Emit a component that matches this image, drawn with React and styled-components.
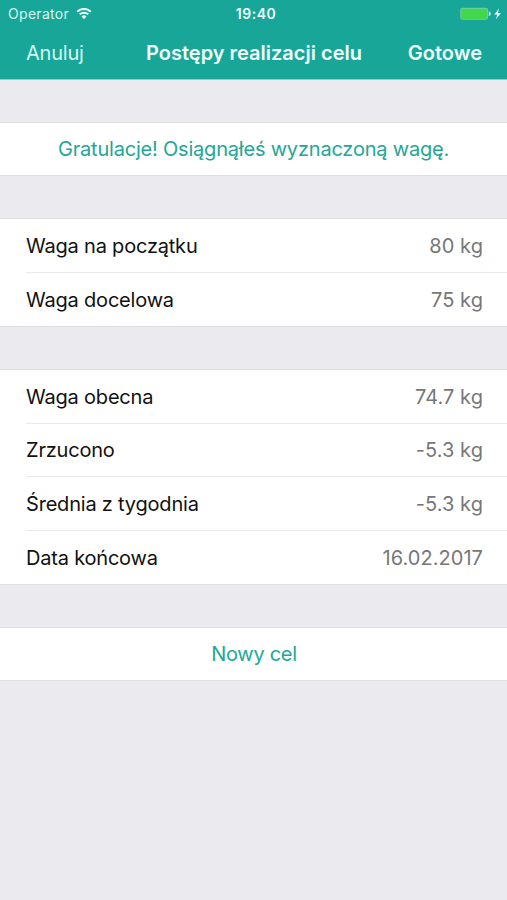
import styled, { createGlobalStyle } from "styled-components";

const startRows = [
  { label: "Waga na początku", value: "80 kg" },
  { label: "Waga docelowa", value: "75 kg" },
];

const progressRows = [
  { label: "Waga obecna", value: "74.7 kg" },
  { label: "Zrzucono", value: "-5.3 kg" },
  { label: "Średnia z tygodnia", value: "-5.3 kg" },
  { label: "Data końcowa", value: "16.02.2017" },
];

const WifiIcon = () => (
  <svg width="16" height="12" viewBox="0 0 16 12" fill="none">
    <path d="M1.2 3.700a9.700 9.700 0 0 1 13.600 0" stroke="#effffb" strokeWidth="2" />
    <path d="M3.700 6.400a6.100 6.100 0 0 1 8.600 0" stroke="#effffb" strokeWidth="2" />
    <path d="M8 11.200 5.500 8.600a3.500 3.500 0 0 1 5 0z" fill="#effffb" />
  </svg>
);

const BatteryIcon = () => (
  <svg width="42" height="14" viewBox="0 0 42 14">
    <rect x="0.3" y="0.8" width="27.8" height="12" rx="2.4" fill="#74cda8" />
    <rect x="1.3" y="1.7" width="25.8" height="10.2" rx="1.4" fill="#43d74e" />
    <path d="M28.8 4.6c1.3.2 2 1.1 2 2.2s-.7 2-2 2.2z" fill="#bdf0e2" />
    <path d="M39 1.6 34.300 7.500h2.900L36 12.200l4.900-6.100h-3z" fill="#effffb" />
  </svg>
);

const Table = ({ rows }) => (
  <Section>
    {rows.map(({ label, value }) => (
      <Row key={label}>
        <span>{label}</span>
        <Value>{value}</Value>
      </Row>
    ))}
  </Section>
);

const App = () => {
  return (
    <>
      <GlobalStyle />
      <Screen>
        <Header>
          <StatusBar>
            <Carrier>
              Operator
              <WifiIcon />
            </Carrier>
            <Time>19:40</Time>
            <Battery>
              <BatteryIcon />
            </Battery>
          </StatusBar>
          <NavBar>
            <NavButton>Anuluj</NavButton>
            <Title>Postępy realizacji celu</Title>
            <NavButton $strong>Gotowe</NavButton>
          </NavBar>
        </Header>
        <Main>
          <Section>
            <Message>Gratulacje! Osiągnąłeś wyznaczoną wagę.</Message>
          </Section>
          <Table rows={startRows} />
          <Table rows={progressRows} />
          <Section>
            <Action>Nowy cel</Action>
          </Section>
        </Main>
      </Screen>
    </>
  );
};
export default App;

const GlobalStyle = createGlobalStyle`
  * {
    box-sizing: border-box;
  }
  body {
    margin: 0;
    font-family: Inter, "Liberation Sans", sans-serif;
    background: #eaeaef;
  }
  button {
    padding: 0;
    border: 0;
    background: none;
    font: inherit;
    color: inherit;
    letter-spacing: inherit;
  }
`;

const Screen = styled.div`
  min-height: 100vh;
  background: #eaeaef;
`;

const Header = styled.header`
  height: 80px;
  border-bottom: 1px solid #8fd0cb;
  background: #18a699;
  color: #effffb;
`;

const StatusBar = styled.div`
  display: grid;
  grid-template-columns: 1fr auto 1fr;
  align-items: center;
  height: 27px;
  padding: 0 5px 0 8px;
  font-size: 14px;
`;

const Carrier = styled.div`
  display: flex;
  align-items: center;
  gap: 7px;
  letter-spacing: 0.3px;
  color: #d5f7ef;
`;

const Time = styled.div`
  padding-left: 2px;
  font-weight: 600;
  letter-spacing: 0.5px;
`;

const Battery = styled.div`
  display: flex;
  justify-content: flex-end;
`;

const NavBar = styled.nav`
  display: grid;
  grid-template-columns: 1fr auto 1fr;
  align-items: center;
  height: 52px;
  padding: 0 25px 0 26px;
  font-size: 20px;
`;

const NavButton = styled.button`
  justify-self: ${({ $strong }) => ($strong ? "end" : "start")};
  font-weight: ${({ $strong }) => ($strong ? 600 : 400)};
  letter-spacing: ${({ $strong }) => ($strong ? 0 : "-0.2px")};
  color: ${({ $strong }) => ($strong ? "#effffb" : "#d5f7ef")};
`;

const Title = styled.h1`
  margin: 0;
  font-size: 20px;
  font-weight: 600;
`;

const Main = styled.main`
  display: flex;
  flex-direction: column;
  gap: 42.3px;
  padding-top: 42px;
  font-size: 20px;
  line-height: 24px;
  letter-spacing: -0.2px;
`;

const Section = styled.section`
  border: solid #dededf;
  border-width: 1px 0;
  background: #fff;
`;

const Row = styled.div`
  display: flex;
  align-items: center;
  justify-content: space-between;
  height: 52.7px;
  margin-left: 26px;
  padding: 0.6px 24px 0 0;
  color: #111;
  & + & {
    height: 53.7px;
    border-top: 1px solid #e9e9eb;
  }
`;

const Value = styled.span`
  letter-spacing: 0.05px;
  color: #777;
`;

const Message = styled.p`
  margin: 0;
  padding: 14px 0;
  text-align: center;
  color: #22a796;
`;

const Action = styled.button`
  display: block;
  width: 100%;
  height: 52px;
  padding-left: 1px;
  letter-spacing: -0.3px;
  color: #22a796;
`;
